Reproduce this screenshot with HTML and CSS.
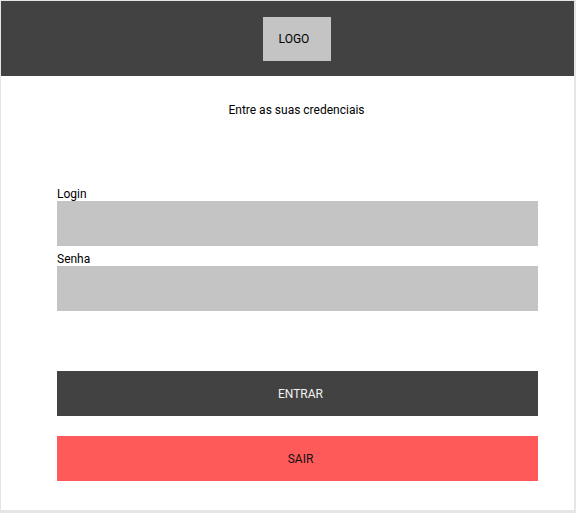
FILE: index.html
```html
<!DOCTYPE html>
<html lang="pt">
<head>
<meta charset="utf-8">
<title>Login</title>
<link rel="stylesheet" href="styles.css">
</head>
<body>
<div class="app">
  <header class="header">
    <div class="logo">LOGO</div>
  </header>
  <p class="title">Entre as suas credenciais</p>
  <form class="form">
    <label class="label" for="login">Login</label>
    <input class="input" id="login" type="text">
    <label class="label label-gap" for="senha">Senha</label>
    <input class="input" id="senha" type="password">
    <button class="btn btn-enter" type="button">ENTRAR</button>
    <button class="btn btn-exit" type="button">SAIR</button>
  </form>
</div>
</body>
</html>
```

FILE: styles.css
```css
* { box-sizing: border-box; }
html, body { margin: 0; padding: 0; }
body {
  background: #e5e5e5;
  font-family: Roboto, "Liberation Sans", sans-serif;
  font-size: 12px;
  color: #000;
  width: 576px;
  height: 513px;
  overflow: hidden;
}
.app {
  margin: 1px 0 0 1px;
  width: 573px;
  height: 509px;
  background: #fff;
  display: flex;
  flex-direction: column;
}
.header {
  height: 75px;
  background: #424242;
  display: flex;
  align-items: center;
  justify-content: center;
  padding-left: 18px;
}
.logo {
  width: 68px;
  height: 44px;
  background: #c4c4c4;
  display: flex;
  align-items: center;
  justify-content: center;
  font-size: 12px;
  margin-top: 1px;
  padding-right: 5px;
}
.title {
  margin: 27px 0 0 0;
  line-height: 14px;
  text-align: center;
  padding-left: 18px;
}
.form {
  margin: 71px 0 0 56px;
  width: 481px;
  display: flex;
  flex-direction: column;
}
.label {
  line-height: 13px;
  height: 13px;
}
.label-gap { margin-top: 7px; }
.input {
  height: 45px;
  border: none;
  background: #c4c4c4;
  margin: 0;
  padding: 0 8px;
  font: inherit;
  outline: none;
}
.btn {
  height: 45px;
  border: none;
  margin: 0;
  padding: 0 0 0 6px;
  font-family: Roboto, "Liberation Sans", sans-serif;
  font-size: 12px;
  cursor: pointer;
}
.btn-enter {
  margin-top: 60px;
  background: #424242;
  color: #f2f2f2;
}
.btn-exit {
  margin-top: 20px;
  background: #ff5a5a;
  color: #111;
}
```
